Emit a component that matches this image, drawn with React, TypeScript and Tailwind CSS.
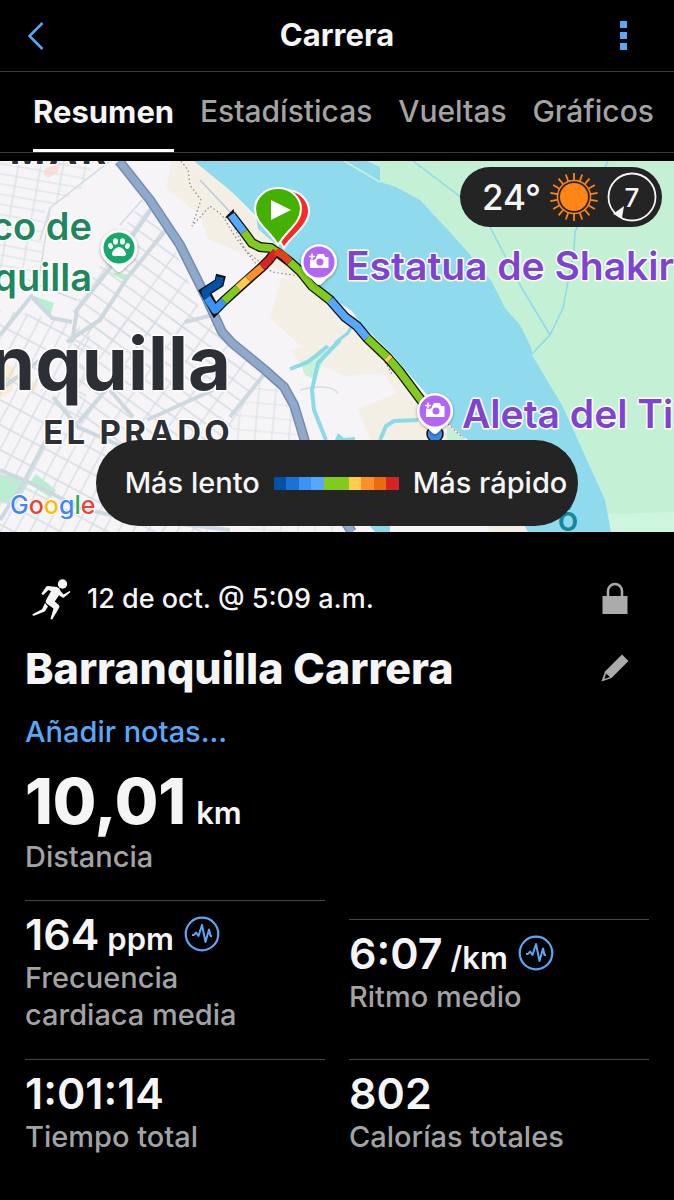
import { ReactNode } from "react";

const TABS = ["Resumen", "Estadísticas", "Vueltas", "Gráficos"];

const PACE_COLORS = [
  "#0350a8",
  "#1a72d6",
  "#3a94f5",
  "#56a8ff",
  "#80cb1c",
  "#80cb1c",
  "#ffcb4d",
  "#fb8f2c",
  "#ec6a10",
  "#d62424",
];

const ROUTE = [
  { d: "M231 215 L244 232", color: "#56a8ff" },
  { d: "M244 232 L252 243 L260 247 L271 248 L277 252", color: "#80cb1c" },
  { d: "M220 277 L219 283 L205 292 L207 298", color: "#0350a8" },
  { d: "M207 298 L215 310 L224 301", color: "#3a94f5" },
  { d: "M224 301 L238 288", color: "#80cb1c" },
  { d: "M238 288 L248 279", color: "#ffcb4d" },
  { d: "M248 279 L262 267", color: "#fb8f2c" },
  { d: "M262 267 L269 260 L276 251", color: "#d62424" },
  { d: "M276 251 L284 256 L290 262", color: "#e04416" },
  { d: "M290 262 L300 271 L312 286 L330 300", color: "#80cb1c" },
  { d: "M330 300 L345 317 L357 326 L367 338", color: "#56a8ff" },
  { d: "M367 338 L387 357", color: "#80cb1c" },
  { d: "M387 357 L390 360", color: "#ffcb4d" },
  { d: "M390 360 L400 372 L424 404", color: "#80cb1c" },
];

const ROUTE_OUTLINE =
  "M231 215 L244 232 L252 243 L260 247 L271 248 L277 252 L290 262 L300 271 L312 286 L330 300 L345 317 L357 326 L367 338 L387 357 L400 372 L424 404 M276 251 L269 260 L262 267 L224 301 L215 310 L205 292 L219 283 L221 275";

const SUN_RAYS = Array.from({ length: 18 }, (_, i) => i * 20);

const CameraPin = ({ x, y }: { x: number; y: number }) => (
  <g transform={`translate(${x} ${y})`}>
    <path
      d="M0 23 C-3 23 -6 17 -10 15 A18 18 0 1 1 10 15 C6 17 3 23 0 23Z"
      fill="#fff"
      filter="url(#shadow)"
    />
    <circle r="15.5" fill="#b266f7" />
    <path d="M-9 -3 H-4 L-1 -8 H5 L6 -5 H9.500 V6 H-9Z" fill="#fff" />
    <circle cx="1" cy="0" r="3.5" fill="#b266f7" />
    <path d="M-10 -5.500 H-3 M-6.500 -9 V-2" stroke="#b266f7" strokeWidth="4" />
    <path d="M-10 -5.500 H-4 M-7 -8.500 V-2.500" stroke="#fff" strokeWidth="1.600" />
  </g>
);

const RouteMap = () => (
  <svg
    viewBox="0 161 674 371"
    preserveAspectRatio="xMidYMid slice"
    className="block h-full w-full"
    role="img"
    aria-label="Mapa del recorrido"
  >
    <defs>
      <filter id="shadow" x="-30%" y="-30%" width="160%" height="160%">
        <feDropShadow dx="0" dy="1" stdDeviation="1.500" floodOpacity="0.4" />
      </filter>
      <pattern id="gridNorth" width="22" height="10" patternUnits="userSpaceOnUse" patternTransform="rotate(10)">
        <path d="M0 1 H22 M3 0 V10" stroke="#d5dfe5" strokeWidth="1.200" />
      </pattern>
      <pattern id="gridDiagonal" width="24" height="13" patternUnits="userSpaceOnUse" patternTransform="rotate(36)">
        <path d="M0 1 H24 M3 0 V13" stroke="#d5dde4" strokeWidth="1.300" />
      </pattern>
      <pattern id="gridSouth" width="13" height="22" patternUnits="userSpaceOnUse" patternTransform="rotate(28)">
        <path d="M0 1 H13 M3 0 V22" stroke="#d5dde4" strokeWidth="1.300" />
      </pattern>
      <pattern id="gridEast" width="17" height="14" patternUnits="userSpaceOnUse" patternTransform="rotate(5)">
        <path d="M0 1 H17 M3 0 V14" stroke="#dbe2e7" strokeWidth="1.200" />
      </pattern>
    </defs>

    <rect y="161" width="674" height="371" fill="#f6f4f6" />

    {/* sand and parks */}
    <g fill="#f3efe4">
      <path d="M172 161 H194 L232 192 L300 270 L380 345 L440 425 L528 532 H490 L430 440 L360 340 L276 268 L208 239 L200 215 L166 188Z" />
      <path d="M282 277 L325 300 L400 372 L344 376 L335 360 L300 345 L270 318Z" />
      <path d="M358 409 L405 390 L440 410 V440 H370Z" />
      <path d="M290 350 L325 342 L340 345 L345 375 L318 365 L300 362Z" />
    </g>
    <path d="M0 362 L15 368 L12 390 L0 398Z M30 380 L38 384 L33 396Z" fill="#fbeccb" />
    <path d="M46 168 L60 163 L58 172 L48 178 L43 174Z" fill="#ffdcdc" />
    <g fill="#b6f0cf">
      <path d="M34 296 L54 303 L50 316 L36 303Z" />
      <path d="M108 272 L130 275 L125 281Z" />
      <path d="M0 475 H14 L28 484 L16 505 L0 502Z" />
      <path d="M36 474 L56 490 L51 498 L29 484Z" />
      <path d="M300 362 L328 350 L315 380 L305 375Z" fill="#c9f1d8" />
    </g>

    {/* street grids */}
    <path d="M0 161 H95 L80 190 L45 210 L38 290 L0 285Z" fill="url(#gridNorth)" />
    <path d="M142 200 L176 252 L200 310 L185 335 L95 345 L72 310Z" fill="url(#gridDiagonal)" />
    <path d="M0 310 L72 320 L100 345 L78 427 L123 447 L230 532 H0Z" fill="url(#gridSouth)" />
    <path d="M72 320 L215 318 L262 372 L225 440 L123 447 L78 427Z" fill="url(#gridDiagonal)" />
    <path d="M262 372 L290 405 L300 440 H226Z" fill="url(#gridEast)" />
    <path d="M250 526 H345 V532 H250Z" fill="url(#gridEast)" />

    {/* avenues */}
    <g fill="none" stroke="#cdd8df" strokeWidth="4">
      <path d="M152 208 L110 268 L77 310 L72 342" />
      <path d="M166 230 L127 278 L100 320 L67 342" />
      <path d="M30 295 L52 318 L72 322" />
      <path d="M30 298 L0 335" />
      <path d="M185 322 L213 315" />
      <path d="M53 397 L78 427 L123 447" />
      <path d="M125 367 L78 423" />
      <path d="M110 390 L133 417" />
      <path d="M213 390 L147 420" />
      <path d="M50 432 L25 480 L0 520" />
      <path d="M0 470 L40 487 L77 507 L110 515 L230 530" />
      <path d="M266 372 L230 417" />
      <path d="M0 390 L40 360" />
    </g>
    <g fill="none" stroke="#d2dbe2" strokeWidth="1.500">
      <path d="M110 161 L50 208 L40 240 M142 200 L120 225" />
      <path d="M50 208 L38 285 L77 300" />
      <path d="M300 390 C315 386 335 385 338 394" />
    </g>

    <path
      d="M119 161 L150 200 L180 245 L205 295 L222 332 L232 343 L265 370 L284 387 L294 405 L301 428 L306 445 M344 520 L352 532"
      fill="none"
      stroke="#758ab0"
      strokeWidth="10"
      strokeLinejoin="round"
    />
    <path
      d="M119 161 L150 200 L180 245 L205 295 L222 332 L232 343 L265 370 L284 387 L294 405 L301 428 L306 445 M344 520 L352 532"
      fill="none"
      stroke="#8ea9ca"
      strokeWidth="7"
      strokeLinejoin="round"
    />

    {/* river */}
    <path
      d="M194 161 L232 192 L256 216 L258 229 L280 248 L302 270 L330 297 L352 311 L362 325 L390 352 L430 398 L450 425 L480 450 L528 532 H612 V161Z"
      fill="#8fdaed"
    />
    <g fill="none" stroke="#8cd9e8" strokeWidth="4">
      <path d="M340 340 L318 363 L312 390 L314 410 L326 440 M328 346 L308 362 L290 369" />
      <path d="M356 318 L348 333 L335 343" strokeWidth="3" />
      <path d="M380 440 L386 426 L394 421 L418 420" />
    </g>
    <path d="M335 440 L338 433 L344 438 L355 437 V440Z M370 526 H390 V532 H375Z" fill="#8cd9e8" />
    <path
      d="M367 161 L380 167 V182 L396 187 L420 200 L432 213 L450 232 L470 255 L492 282 L505 308 L520 325 L531 347 L532 355 L562 405 L605 500 L611 532 H674 V161Z"
      fill="#c4f0d5"
    />
    <path d="M608 514 L674 512 V532 H611Z" fill="#cef6df" />
    <path d="M344 161 L380 182" stroke="#c4f0d5" strokeWidth="2" />
    <path d="M447 425 L462 437 L470 445 H447Z" fill="#c4f0d5" />
    <g fill="none" stroke="#8fd9e8" strokeWidth="1.500">
      <path d="M413 161 L458 195 L490 227 L520 285 L550 335 L532 354" />
      <path d="M608 161 L575 232 L574 250 L563 308 L550 335" />
    </g>
    <path d="M200 180 L232 214 M440 415 L465 438" fill="none" stroke="#b9cadd" strokeWidth="1.500" />
    <g fill="none" stroke="#8b8b8b" strokeWidth="1.200" strokeDasharray="1.500 2.500">
      <path d="M181 161 L188 170 L190 185 L201 200 L192 226 L210 206 L222 215 L236 238 L256 264 M228 214 L245 250 L272 272 L300 276" />
      <path d="M237 225 L262 252 M385 362 L392 374" />
      <path d="M448 424 L463 438" />
    </g>

    {/* place labels */}
    <g
      fontFamily="Inter, sans-serif"
      stroke="#fff"
      strokeWidth="3"
      strokeLinejoin="round"
      paintOrder="stroke"
    >
      <g fill="#2d2f36" textAnchor="end">
        <text x="110" y="164" fontSize="38" fontWeight="700" className="tracking-widest">
          MAR
        </text>
        <text x="231" y="390" fontSize="74" fontWeight="700">
          Barranquilla
        </text>
        <text x="233" y="444" fontSize="33" fontWeight="700" className="tracking-widest">
          EL PRADO
        </text>
      </g>
      <g fill="#1f875f" fontSize="38" fontWeight="600" textAnchor="end">
        <text x="92" y="240">Zoológico de</text>
        <text x="92" y="291">Barranquilla</text>
      </g>
      <text x="568" y="531" fontSize="26" fontWeight="700" fill="#138a9c" stroke="none" textAnchor="middle">
        Ó
      </text>
    </g>

    <g transform="translate(119 248)">
      <path
        d="M0 24 C-3 24 -6 18 -11 15 A18.500 18.500 0 1 1 11 15 C6 18 3 24 0 24Z"
        fill="#fff"
        filter="url(#shadow)"
      />
      <circle r="15.500" fill="#18a76c" />
      <g fill="#fff">
        <ellipse cx="-8.500" cy="-2" rx="2.300" ry="3" transform="rotate(-20 -8.500 -2)" />
        <ellipse cx="-3.500" cy="-6.500" rx="2.500" ry="3.300" />
        <ellipse cx="3.500" cy="-6.500" rx="2.500" ry="3.300" />
        <ellipse cx="8.500" cy="-2" rx="2.300" ry="3" transform="rotate(20 8.500 -2)" />
        <path d="M0 -1 C3 -1 7 3 7 6 C7 9 3 8 0 8 C-3 8 -7 9 -7 6 C-7 3 -3 -1 0 -1Z" />
      </g>
    </g>

    {/* recorded track, coloured by pace */}
    <circle cx="435" cy="434" r="8" fill="#3a86e0" stroke="#111" strokeWidth="1.500" />
    <path d="M227 217 L233 211 L235 219Z" fill="#111" stroke="#111" strokeWidth="2" />
    <path d={ROUTE_OUTLINE} fill="none" stroke="#111" strokeWidth="10" />
    {ROUTE.map((segment) => (
      <path
        key={segment.d}
        d={segment.d}
        fill="none"
        stroke={segment.color}
        strokeWidth="7.500"
        strokeLinejoin="round"
      />
    ))}

    <path
      d="M284 248 C290 237 309 226 309 211 A23 21 0 0 0 286 190 L262 212Z"
      fill="#fa2a2a"
      stroke="#fff"
      strokeWidth="2"
    />
    <path
      d="M278 245 C270 231 255 223 255 209 A23 21 0 0 1 301 209 C301 223 286 231 278 245Z"
      fill="#44b000"
      stroke="#fff"
      strokeWidth="2"
    />
    <path d="M271 200 L291 210 L271 220Z" fill="#fff" />

    <CameraPin x={319} y={262} />
    <CameraPin x={435} y={411} />
    <g
      fontFamily="Inter, sans-serif"
      fontSize="39"
      fontWeight="600"
      fill="#7e44d1"
      stroke="#fff"
      strokeWidth="3"
      strokeLinejoin="round"
      paintOrder="stroke"
    >
      <text x="346" y="280">Estatua de Shakira</text>
      <text x="462" y="428">Aleta del Tiburón</text>
    </g>

    <text
      x="10"
      y="514"
      fontFamily="Inter, sans-serif"
      fontSize="25"
      fontWeight="500"
      stroke="#fff"
      strokeWidth="2"
      paintOrder="stroke"
    >
      <tspan fill="#4285f4">G</tspan>
      <tspan fill="#ea4335">o</tspan>
      <tspan fill="#fbbc05">o</tspan>
      <tspan fill="#4285f4">g</tspan>
      <tspan fill="#34a853">l</tspan>
      <tspan fill="#ea4335">e</tspan>
    </text>
  </svg>
);

const SunIcon = () => (
  <svg viewBox="-25 -25 50 50" className="size-[50px]" aria-hidden="true">
    <circle r="14" fill="#ff8519" />
    <circle r="16.500" fill="none" stroke="#ff8519" strokeWidth="1.500" />
    {SUN_RAYS.map((angle) => (
      <path
        key={angle}
        d="M0 -17 V-24"
        stroke="#ff8519"
        strokeWidth="1.800"
        transform={`rotate(${angle})`}
      />
    ))}
  </svg>
);

const WindBadge = () => (
  <span className="grid size-[50px] place-items-center">
    <svg viewBox="-25 -25 50 50" className="col-start-1 row-start-1 size-[50px]" aria-hidden="true">
      <circle r="23.500" fill="none" stroke="#f5f5f5" strokeWidth="1.800" />
      <path d="M-8 9 L-10 21 L-19 17Z" fill="#f5f5f5" />
    </svg>
    <span className="col-start-1 row-start-1 text-[26px] font-medium">7</span>
  </span>
);

const TrendButton = () => (
  <button type="button" aria-label="Ver gráfico" className="ml-2.5 self-center">
    <svg viewBox="0 0 36 36" className="block size-9" fill="none" stroke="#5aa7f7">
      <circle cx="18" cy="18" r="16.300" strokeWidth="2.200" />
      <path
        d="M8 19 H10 L12 16.500 L14.500 20 L18 9 L21.500 26 L25 13.500 L26.500 20 H28"
        strokeWidth="2"
        strokeLinejoin="round"
      />
    </svg>
  </button>
);

const RunnerIcon = () => (
  <svg viewBox="0 0 40 42" className="h-[42px] w-10" fill="#f5f5f5" aria-hidden="true">
    <circle cx="31.500" cy="6" r="4.700" />
    <path d="M10.500 15.500 L15.300 8.600 Q16 7.800 17 8 L26 9 Q29 10 29.500 13 L32.500 16.500 L38.500 13 Q39.700 13.300 39 14.500 L33 19.500 Q31.800 20 31 19.200 L28 17.200 L23.800 23.500 L27.800 27 Q28.800 28 28.300 29.500 L21.500 41 Q20.300 42 19.500 40.800 L22.500 30.500 L15.500 25.500 Q14 23.500 15.300 21.500 L20 13.200 L17.500 12 L12.500 16.800 Q11 17.300 10.500 15.500Z" />
    <path d="M14 25 L17 28.500 L13.800 33.500 L3 37.800 Q1.200 37.800 1.500 36.300 L11 31.300Z" />
  </svg>
);

type StatProps = { value: string; unit?: string; trend?: boolean; children: ReactNode };

const Stat = ({ value, unit, trend, children }: StatProps) => (
  <div className="flex flex-col border-t border-[#474747] pt-2 pb-[26px]">
    <dt className="order-last text-[29px] leading-[37px] font-medium text-[#a3a3a3]">{children}</dt>
    <dd className="flex h-[50px] items-baseline text-[43px] leading-[50px] font-semibold">
      {value}
      {unit && <span className="ml-2 text-[31px] leading-none">{unit}</span>}
      {trend && <TrendButton />}
    </dd>
  </div>
);

export default function App() {
  return (
    <div className="min-h-screen bg-black font-[Inter,sans-serif] text-[#f5f5f5]">
      <header className="grid h-[72px] grid-cols-[1fr_auto_1fr] items-center border-b border-[#3a3a3a] px-[27px]">
        <button type="button" aria-label="Atrás" className="justify-self-start">
          <svg viewBox="0 0 17 28" className="block h-7 w-[17px]" fill="none" stroke="#5aa7f7" strokeWidth="2.500">
            <path d="M15.500 1 L2.500 14 L15.500 27" />
          </svg>
        </button>
        <h1 className="text-[31px] font-bold">Carrera</h1>
        <button type="button" aria-label="Más opciones" className="mr-5 justify-self-end">
          <svg viewBox="0 0 8 30" className="block h-[30px] w-2" fill="#5aa7f7">
            <path d="M1 0 H8 V7 H1Z M1 11 H8 V18 H1Z M1 22 H8 V29 H1Z" />
          </svg>
        </button>
      </header>

      <nav className="flex h-[81px] justify-between border-b border-[#3a3a3a] pr-5 pl-[33px]">
        {TABS.map((tab, i) => (
          <a
            key={tab}
            href="#"
            className={
              i === 0
                ? "border-b-[3px] border-white text-[31px] leading-[79px] font-bold"
                : "text-[30px] leading-[79px] font-medium text-[#a3a3a3]"
            }
          >
            {tab}
          </a>
        ))}
      </nav>

      <section className="relative mt-2 h-[371px] overflow-hidden">
        <RouteMap />
        <div className="absolute top-1.5 right-3 flex h-[60px] items-center gap-2 rounded-full bg-[#242424] pr-[5px] pl-[22px] text-[35px] font-medium">
          24°
          <SunIcon />
          <WindBadge />
        </div>
        <div className="absolute bottom-1.5 left-1/2 flex h-[86px] w-[482px] -translate-x-1/2 items-center justify-center gap-3.5 rounded-full bg-[#242424] pl-[18px] text-[29px] font-medium whitespace-nowrap">
          Más lento
          <span className="flex h-[13px] w-[125px]">
            {PACE_COLORS.map((color, i) => (
              <span key={i} className="flex-1" style={{ backgroundColor: color }} />
            ))}
          </span>
          Más rápido
        </div>
      </section>

      <main className="px-[25px] pt-[46px]">
        <div className="flex items-center pr-[21px] pl-1.5">
          <RunnerIcon />
          <p className="ml-4 text-[27px] leading-[42px] font-medium">12 de oct. @ 5:09 a.m.</p>
          <svg viewBox="0 0 26 34" className="ml-auto h-[34px] w-[26px]" fill="#ababab" role="img" aria-label="Privado">
            <path d="M0.500 14 H25.500 V32 H0.500Z" />
            <path d="M6 15 V9 A7 7 0 0 1 20 9 V15" fill="none" stroke="#ababab" strokeWidth="2.500" />
          </svg>
        </div>
        <div className="mt-4 flex items-center justify-between pr-5">
          <h2 className="text-[43px] leading-[64px] font-extrabold">Barranquilla Carrera</h2>
          <button type="button" aria-label="Editar nombre">
            <svg viewBox="0 0 28 28" className="block size-7" fill="#ababab">
              <path d="M21 0.500 L27.500 7 L10.500 24 L0.500 27.500 L4 17.500Z" />
              <path d="M5 19.500 L9 23 L3.500 25Z" fill="#000" />
            </svg>
          </button>
        </div>
        <a href="#" className="mt-3 block w-fit text-[29px] leading-10 font-medium text-[#5aa7f7]">
          Añadir notas...
        </a>

        <dl>
          <div className="flex flex-col pt-3 pb-[25px]">
            <dt className="order-last text-[29px] leading-[37px] font-medium text-[#a3a3a3]">Distancia</dt>
            <dd className="text-[63px] leading-[74px] font-extrabold">
              10,01<span className="ml-2.5 text-[31px] leading-none font-semibold">km</span>
            </dd>
          </div>
          <div className="grid grid-cols-2 items-center gap-x-6">
            <Stat value="164" unit="ppm" trend>
              Frecuencia
              <br />
              cardiaca media
            </Stat>
            <Stat value="6:07" unit="/km" trend>
              Ritmo medio
            </Stat>
            <Stat value="1:01:14">Tiempo total</Stat>
            <Stat value="802">Calorías totales</Stat>
          </div>
        </dl>
      </main>
    </div>
  );
}
